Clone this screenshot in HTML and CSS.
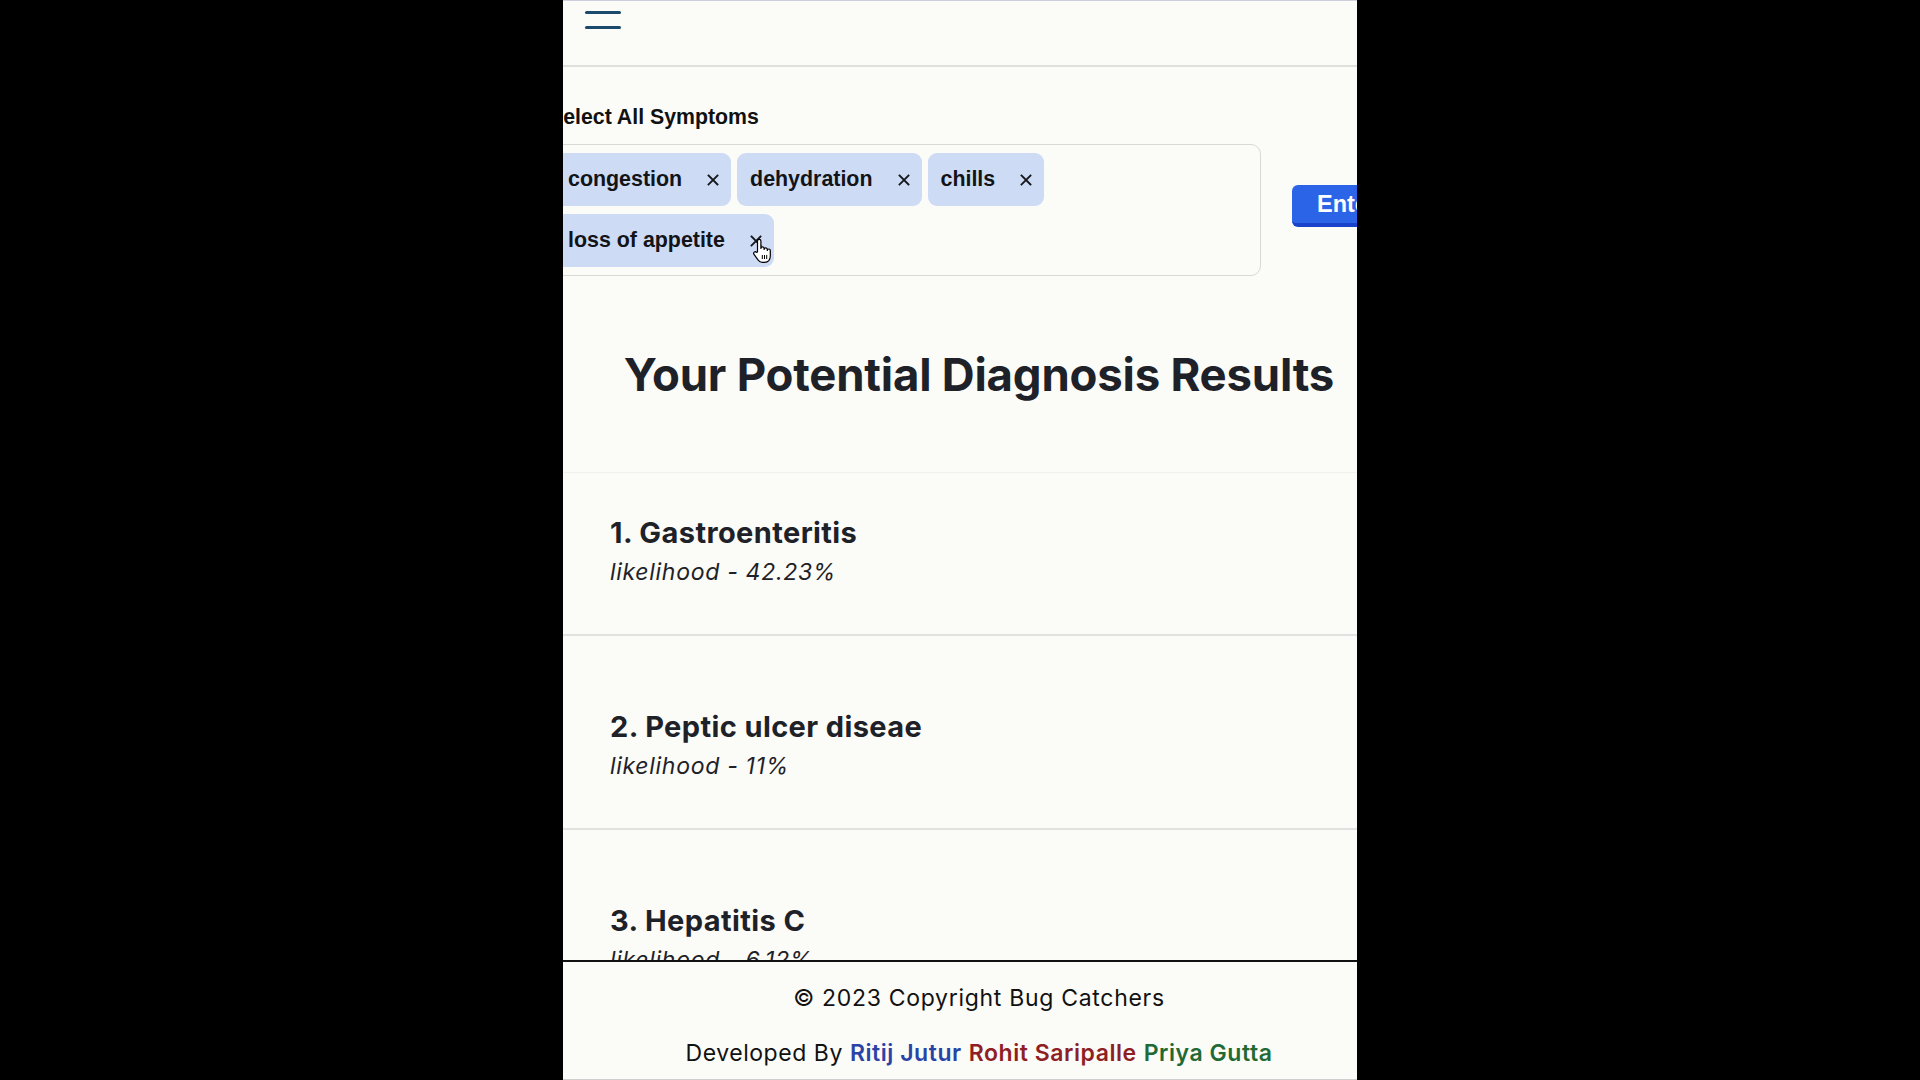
FILE: index.html
```html
<!DOCTYPE html>
<html lang="en">
<head>
<meta charset="utf-8">
<title>Diagnosis Results</title>
<link rel="stylesheet" href="styles.css">
</head>
<body>
<div class="screen">
  <header class="topbar">
    <button class="hamburger" aria-label="Menu"><span></span><span></span></button>
  </header>

  <section class="symptoms">
    <label class="symptoms-label">Select All Symptoms</label>
    <div class="symptoms-row">
      <div class="chip-box">
        <span class="chip">congestion<i class="chip-x"><svg viewBox="0 0 12 12"><path d="M1.5 1.5l9 9M10.5 1.5l-9 9"/></svg></i></span>
        <span class="chip">dehydration<i class="chip-x"><svg viewBox="0 0 12 12"><path d="M1.5 1.5l9 9M10.5 1.5l-9 9"/></svg></i></span>
        <span class="chip">chills<i class="chip-x"><svg viewBox="0 0 12 12"><path d="M1.5 1.5l9 9M10.5 1.5l-9 9"/></svg></i></span>
        <span class="chip">loss of appetite<i class="chip-x"><svg viewBox="0 0 12 12"><path d="M1.5 1.5l9 9M10.5 1.5l-9 9"/></svg></i></span>
      </div>
      <button class="enter-btn">Enter</button>
    </div>
  </section>

  <section class="results-head">
    <h1>Your Potential Diagnosis Results</h1>
  </section>

  <section class="results">
    <article class="result">
      <h3>1. Gastroenteritis</h3>
      <p>likelihood - 42.23%</p>
    </article>
    <article class="result">
      <h3>2. Peptic ulcer diseae</h3>
      <p>likelihood - 11%</p>
    </article>
    <article class="result">
      <h3>3. Hepatitis C</h3>
      <p>likelihood - 6.12%</p>
    </article>
  </section>

  <svg class="cursor" width="22" height="26" viewBox="0 0 22 26" aria-hidden="true">
    <path d="M6.5 14V3a1.7 1.7 0 0 1 3.4 0v7.5a1.6 1.6 0 0 1 3.2 0v1a1.6 1.6 0 0 1 3.2 0v1a1.5 1.5 0 0 1 3 0V18c0 3.6-2.2 6.3-5.6 6.3H11.3c-2 0-3.3-1-4.3-2.5L3 16.3a1.5 1.5 0 0 1 2.4-1.9z" fill="#fff" stroke="#000" stroke-width="1.2" stroke-linejoin="round"/>
    <path d="M11.3 17v4M13.5 17v4M15.7 17v4" stroke="#000" stroke-width="1"/>
  </svg>

  <footer class="footer">
    <p class="copy">© 2023 Copyright Bug Catchers</p>
    <p class="devs">Developed By <span class="dev-blue">Ritij Jutur</span> <span class="dev-red">Rohit Saripalle</span> <span class="dev-green">Priya Gutta</span></p>
  </footer>
</div>
</body>
</html>
```

FILE: styles.css
```css
html, body {
  margin: 0;
  padding: 0;
  background: #000;
}

body {
  display: flex;
  justify-content: center;
  height: 1080px;
  overflow: hidden;
  font-family: Inter, "Liberation Sans", sans-serif;
}

.screen {
  position: relative;
  width: 794px;
  height: 1080px;
  background: #fbfbf7;
  overflow: hidden;
  border-top: 1px solid #cdcfdc;
  box-sizing: border-box;
}

/* header */
.topbar {
  height: 64px;
  border-bottom: 2px solid #dfdfdc;
  padding-left: 22px;
}

.hamburger {
  display: flex;
  flex-direction: column;
  gap: 12px;
  padding: 10px 0 0;
  margin: 0;
  border: 0;
  background: none;
}

.hamburger span {
  display: block;
  width: 36px;
  height: 3px;
  border-radius: 2px;
  background: #1c4a6c;
}

/* symptoms form */
.symptoms {
  margin-left: -17px;
  padding-top: 38px;
}

.symptoms-label {
  display: block;
  margin-left: 3px;
  font-family: "Liberation Sans", Arial, sans-serif;
  font-weight: 700;
  font-size: 21.3px;
  line-height: 24px;
  color: #111;
}

.symptoms-row {
  display: flex;
  align-items: flex-start;
  gap: 31px;
  margin-top: 15px;
}

.chip-box {
  flex: 0 0 715px;
  box-sizing: border-box;
  display: flex;
  flex-wrap: wrap;
  align-content: flex-start;
  gap: 8px 6px;
  padding: 8px;
  border: 1px solid #d8d8d6;
  border-radius: 10px;
  height: 132px;
}

.chip {
  display: inline-flex;
  align-items: center;
  gap: 25px;
  height: 53px;
  padding: 0 12px 0 13px;
  background: #cddbf5;
  border-radius: 9px;
  font-family: "Liberation Sans", Arial, sans-serif;
  font-weight: 700;
  font-size: 21.4px;
  color: #121418;
}

.chip-x {
  display: block;
  width: 12px;
  height: 12px;
}

.chip-x svg {
  display: block;
  width: 12px;
  height: 12px;
  stroke: #16181c;
  stroke-width: 1.8;
  stroke-linecap: square;
  fill: none;
}

.enter-btn {
  flex: 0 0 auto;
  margin-top: 41px;
  height: 42px;
  padding: 0 25px;
  border: 0;
  border-bottom: 4px solid #1a43cc;
  border-radius: 6px;
  background: #2c64e8;
  color: #fff;
  font-family: "Liberation Sans", Arial, sans-serif;
  font-weight: 700;
  font-size: 23.5px;
}

/* results */
.results-head {
  padding: 71px 0 69px 38px;
  border-bottom: 1px solid #f0f0ec;
  text-align: center;
}

.results-head h1 {
  margin: 0;
  font-size: 45.5px;
  line-height: 56px;
  font-weight: 700;
  color: #1e2228;
  letter-spacing: -0.2px;
}

.result {
  padding: 74px 0 46px 47px;
  border-bottom: 2px solid #e1e1df;
}

.result:first-child {
  padding-top: 43px;
}

.result h3 {
  margin: 0;
  font-size: 29px;
  line-height: 34px;
  font-weight: 700;
  letter-spacing: 0.4px;
  color: #1e2228;
}

.result p {
  margin: 6px 0 0;
  font-size: 23px;
  line-height: 32px;
  font-style: italic;
  letter-spacing: 0.7px;
  color: #1e2228;
}

/* pointer overlay */
.cursor {
  position: absolute;
  left: 188px;
  top: 237px;
}

/* footer */
.footer {
  position: absolute;
  left: 0;
  right: 0;
  bottom: 0;
  height: 120px;
  box-sizing: border-box;
  border-top: 2px solid #111;
  border-bottom: 1px solid #cfcfcf;
  background: #fbfbf7;
  padding: 20px 0 0 38px;
  text-align: center;
  font-size: 23px;
  line-height: 32px;
  letter-spacing: 0.7px;
  color: #111;
}

.footer p {
  margin: 0;
}

.footer .devs {
  margin-top: 23px;
  letter-spacing: 0.55px;
}

.dev-blue,
.dev-red,
.dev-green {
  font-weight: 600;
}

.dev-blue { color: #2a44a6; }
.dev-red { color: #8f1f24; }
.dev-green { color: #1f6a35; }
```
